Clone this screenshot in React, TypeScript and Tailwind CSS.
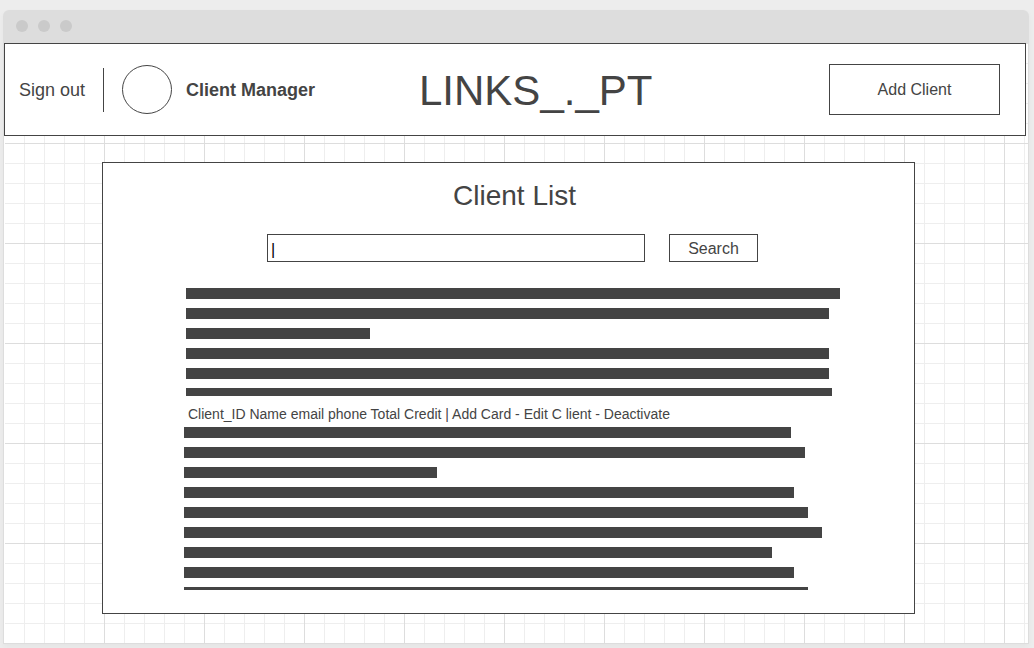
import React from "react";

type Bar = { width: number; height?: number };

const upperBars: Bar[] = [
  { width: 654 },
  { width: 643 },
  { width: 184 },
  { width: 643 },
  { width: 643 },
  { width: 646, height: 8 },
];

const lowerBars: Bar[] = [
  { width: 607 },
  { width: 621 },
  { width: 253 },
  { width: 610 },
  { width: 624 },
  { width: 638 },
  { width: 588 },
  { width: 610 },
  { width: 624, height: 3 },
];

function TextBars({ bars }: { bars: Bar[] }) {
  return (
    <div className="flex flex-col gap-[9px]" aria-hidden="true">
      {bars.map((bar, i) => (
        <div
          key={i}
          className="max-w-full bg-[#444]"
          style={{ width: bar.width, height: bar.height ?? 11 }}
        />
      ))}
    </div>
  );
}

function TitleBar() {
  return (
    <div className="flex h-[33px] items-center gap-2.5 rounded-t-md bg-[#ddd] px-[13px] pb-0.5">
      <span className="size-3 rounded-full bg-[#cacaca]" />
      <span className="size-3 rounded-full bg-[#cacaca]" />
      <span className="size-3 rounded-full bg-[#cacaca]" />
    </div>
  );
}

function Header() {
  return (
    <header className="mr-0.5 flex h-[93px] items-center border border-[#444] bg-white pr-[25px] pl-3.5">
      <div className="flex w-[400px] shrink-0 items-center">
        <a href="#sign-out" className="w-[84px] text-lg">
          Sign out
        </a>
        <div className="h-11 w-px bg-[#444]" />
        <svg className="ml-[18px] h-[49px] w-[50px]" viewBox="0 0 50 49" aria-hidden="true">
          <ellipse cx="25" cy="24.5" rx="24.5" ry="24" fill="#fff" stroke="#444" />
        </svg>
        <span className="ml-3.5 text-lg font-bold">Client Manager</span>
      </div>
      <h1 className="pt-0.5 text-[42px] leading-[48px]">LINKS_._PT</h1>
      <button type="button" className="ml-auto h-[51px] w-[171px] border border-[#444] bg-white text-base">
        Add Client
      </button>
    </header>
  );
}

function ClientList() {
  return (
    <main className="mt-[26px] mr-[113px] mb-[29px] ml-[98px] border border-[#444] bg-white pt-[17px] pr-[69px] pb-[23px] pl-[81px]">
      <h2 className="text-center text-[28px] leading-8">Client List</h2>
      <form
        className="mt-[22px] mr-[87px] ml-[83px] flex h-7 gap-6"
        onSubmit={(e) => e.preventDefault()}
      >
        <input
          type="text"
          aria-label="Search clients"
          defaultValue="|"
          className="min-w-0 flex-1 border border-[#444] bg-white pt-1 pl-[3px] text-base text-black outline-none"
        />
        <button type="submit" className="w-[89px] border border-[#444] bg-white pt-0.5 text-base">
          Search
        </button>
      </form>
      <div className="mt-[26px] pl-0.5">
        <TextBars bars={upperBars} />
      </div>
      <p className="pt-2 pb-[3px] pl-1 text-sm">
        Client_ID Name email phone Total Credit | Add Card - Edit C lient - Deactivate
      </p>
      <TextBars bars={lowerBars} />
    </main>
  );
}

export default function App() {
  return (
    <div className="min-h-screen bg-[#ededed] pt-2.5 pr-[5px] pb-1 pl-[3px] font-['Liberation_Sans',Arial,sans-serif] text-[#444]">
      <div className="rounded-t-md shadow-[0_3px_6px_rgba(0,0,0,0.04)]">
        <TitleBar />
        <div className="flow-root border-x border-b border-[#ddd] bg-white bg-[linear-gradient(#fff,#fff),linear-gradient(to_right,#ddd_1px,transparent_1px),linear-gradient(to_bottom,#ddd_1px,transparent_1px),linear-gradient(to_right,#eee_1px,transparent_1px),linear-gradient(to_bottom,#eee_1px,transparent_1px)] bg-size-[1px_100%,100px_100px,100px_100px,20px_20px,20px_20px] [background-repeat:no-repeat,repeat,repeat,repeat,repeat]">
          <Header />
          <ClientList />
        </div>
      </div>
    </div>
  );
}
